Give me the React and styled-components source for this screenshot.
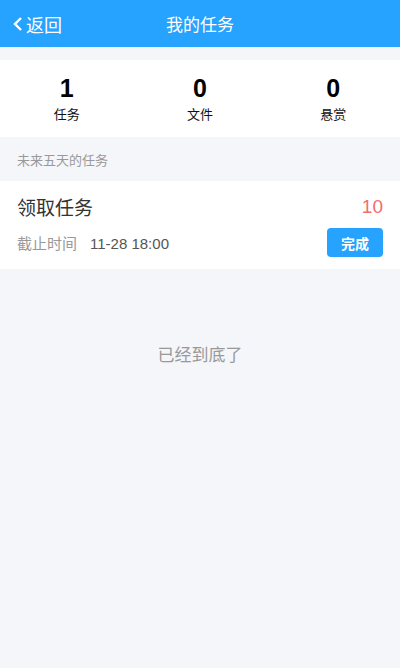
import React from 'react'
import styled, { createGlobalStyle } from 'styled-components'

const GlobalStyle = createGlobalStyle`
  body {
    margin: 0;
    background: #fff;
    font-family: "Noto Sans CJK SC", "Liberation Sans", sans-serif;
  }
`

const Page = styled.div`
  min-height: 668px;
  background: #f5f6fa;
`

const Header = styled.header`
  height: 47px;
  background: #26a2ff;
  color: #fff;
  display: flex;
  align-items: center;
  justify-content: center;
  position: relative;
  font-size: 17px;
`

const Back = styled.div`
  position: absolute;
  left: 13px;
  top: 0;
  bottom: 0;
  display: flex;
  align-items: center;
  gap: 3px;
  font-size: 18px;
`

const Stats = styled.div`
  margin-top: 13px;
  height: 77px;
  background: #fff;
  display: grid;
  grid-template-columns: repeat(3, 1fr);
  align-items: center;
`

const Stat = styled.div`
  display: flex;
  flex-direction: column;
  align-items: center;
`

const Num = styled.div`
  font-family: "Liberation Sans", sans-serif;
  font-weight: bold;
  font-size: 25px;
  line-height: 28px;
  color: #000;
`

const Label = styled.div`
  font-size: 13px;
  line-height: 18px;
  margin-top: 3px;
  color: #111;
`

const Section = styled.div`
  height: 44px;
  padding-left: 17px;
  display: flex;
  align-items: center;
  font-size: 13px;
  color: #999;
`

const Card = styled.div`
  background: #fff;
  height: 88px;
  padding: 0 17px;
  display: flex;
  flex-direction: column;
  justify-content: center;
  gap: 8px;
`

const Row = styled.div`
  display: flex;
  align-items: center;
  justify-content: space-between;
`

const Title = styled.div`
  font-size: 19px;
  color: #333;
`

const Reward = styled.div`
  font-family: "Liberation Sans", sans-serif;
  font-size: 19px;
  color: #f56c6c;
`

const Deadline = styled.div`
  font-size: 15px;
  color: #999;
  display: flex;
  align-items: baseline;
  gap: 13px;
`

const Time = styled.span`
  font-family: "Liberation Sans", sans-serif;
  font-size: 15px;
  color: #555;
`

const Button = styled.button`
  width: 56px;
  height: 29px;
  border: none;
  border-radius: 4px;
  background: #26a2ff;
  color: #fff;
  font-family: inherit;
  font-size: 14px;
  font-weight: bold;
  padding: 0;
`

const End = styled.div`
  padding-top: 72px;
  text-align: center;
  font-size: 17px;
  color: #999;
`

export default function App() {
  return (
    <>
      <GlobalStyle />
      <Page>
        <Header>
          <Back>
            <svg width="10" height="16" viewBox="0 0 10 16">
              <path d="M8 2 L2 8 L8 14" fill="none" stroke="#fff" strokeWidth="2.4" />
            </svg>
            <span>返回</span>
          </Back>
          我的任务
        </Header>
        <Stats>
          <Stat><Num>1</Num><Label>任务</Label></Stat>
          <Stat><Num>0</Num><Label>文件</Label></Stat>
          <Stat><Num>0</Num><Label>悬赏</Label></Stat>
        </Stats>
        <Section>未来五天的任务</Section>
        <Card>
          <Row>
            <Title>领取任务</Title>
            <Reward>10</Reward>
          </Row>
          <Row>
            <Deadline>截止时间<Time>11-28 18:00</Time></Deadline>
            <Button>完成</Button>
          </Row>
        </Card>
        <End>已经到底了</End>
      </Page>
    </>
  )
}
